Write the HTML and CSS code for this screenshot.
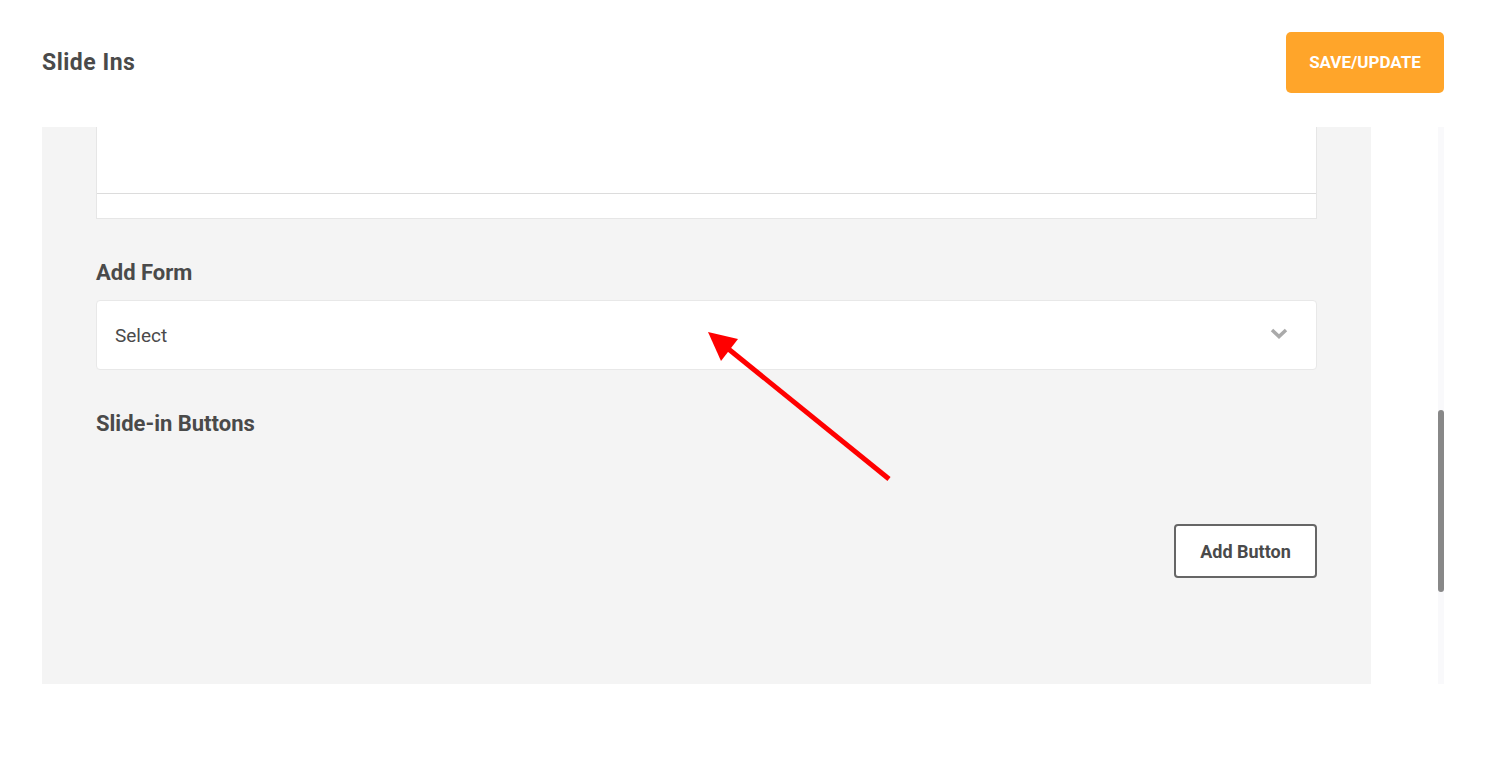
FILE: index.html
```html
<!DOCTYPE html>
<html lang="en">
<head>
    <meta charset="UTF-8">
    <title>Slide Ins</title>
    <link rel="stylesheet" href="styles.css">
</head>
<body>
    <header class="page-header">
        <h1 class="page-title">Slide Ins</h1>
        <button class="save-button">SAVE/UPDATE</button>
    </header>

    <main class="page-body">
        <section class="panel">
            <div class="editor-box">
                <div class="editor-area"></div>
                <div class="editor-footer"></div>
            </div>

            <label class="field-label">Add Form</label>
            <div class="select-box">
                <span>Select</span>
                <svg class="chevron" width="18" height="11" viewBox="0 0 18 11">
                    <path d="M2 2 L9 8.5 L16 2" fill="none" stroke="#aaaaaa" stroke-width="3.5"/>
                </svg>
            </div>

            <h2 class="field-label section-title">Slide-in Buttons</h2>
            <div class="button-row">
                <button class="add-button">Add Button</button>
            </div>
        </section>

        <div class="scrollbar">
            <div class="scroll-thumb"></div>
        </div>
    </main>

    <svg class="annotation" width="1493" height="757" viewBox="0 0 1493 757">
        <line x1="889" y1="479" x2="726" y2="347" stroke="#ff0000" stroke-width="5"/>
        <polygon points="708,332 738,339 721,361" fill="#ff0000"/>
    </svg>
</body>
</html>
```

FILE: styles.css
```css
* { box-sizing: border-box; margin: 0; padding: 0; }
body {
    font-family: 'Roboto', 'Liberation Sans', sans-serif; color: #4a4a4a;
    background-color: #fff; width: 1493px; height: 757px; overflow: hidden; position: relative;
}
.page-header {
    display: flex; justify-content: space-between; align-items: center;
    height: 127px; padding: 0 49px 3px 42px;
}
.page-title { font-size: 23px; font-weight: 700; letter-spacing: 0.5px; color: #4a4a4a; }
.save-button {
    background-color: #ffa52a; color: #fff; border: none; border-radius: 5px;
    width: 158px; height: 61px; font-family: inherit; font-size: 17px; font-weight: 700;
}
.page-body { display: flex; align-items: flex-start; }
.panel {
    width: 1329px; height: 557px; margin-left: 42px; padding: 0 54px;
    background-color: #f4f4f4;
}
.editor-box { background-color: #fff; border: 1px solid #e6e6e6; border-top: none; }
.editor-area { height: 67px; border-bottom: 1px solid #dcdcdc; }
.editor-footer { height: 24px; }
.field-label {
    display: block; font-size: 22px; font-weight: 700; line-height: 24px;
    color: #4a4a4a; margin-top: 42px; margin-bottom: 15px;
}
.select-box {
    display: flex; justify-content: space-between; align-items: center;
    height: 70px; padding: 0 28px 0 18px; background-color: #fff;
    border: 1px solid #e8e8e8; border-radius: 4px; font-size: 19px; color: #4a4a4a;
}
.chevron { margin-top: -3px; }
.section-title { margin-top: 42px; }
.button-row { display: flex; justify-content: flex-end; margin-top: 88px; }
.add-button {
    width: 143px; height: 54px; background-color: #fff; border: 2px solid #666;
    border-radius: 4px; font-family: inherit; font-size: 18px; font-weight: 700; color: #4a4a4a;
}
.scrollbar { width: 6px; height: 557px; margin-left: 67px; background-color: #f9f9fb; }
.scroll-thumb { height: 182px; margin-top: 283px; background-color: #888; border-radius: 3px; }
.annotation { position: absolute; top: 0; left: 0; pointer-events: none; }
```
